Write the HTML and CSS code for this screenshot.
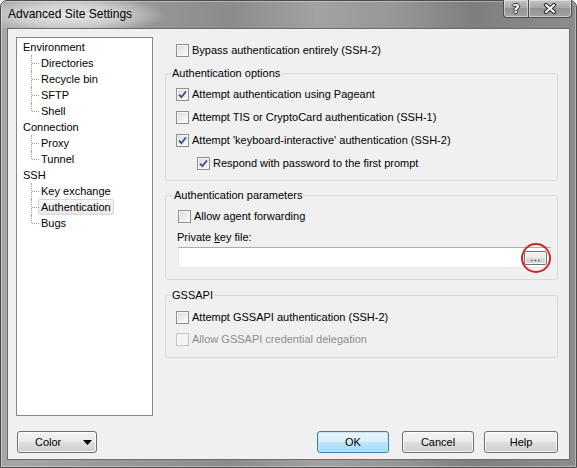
FILE: index.html
```html
<!DOCTYPE html>
<html>
<head>
<meta charset="utf-8">
<title>Advanced Site Settings</title>
<link rel="stylesheet" href="styles.css">
</head>
<body>
<div class="window">
  <div class="titlebar">
    <span class="title">Advanced Site Settings</span>
    <div class="caption">
      <div class="cap-btn cap-help"><span class="qmark">?</span></div>
      <div class="cap-btn cap-close">
        <svg width="14" height="11" viewBox="0 0 14 11">
          <path d="M3 2 L11 9 M11 2 L3 9" stroke="#2e2e2e" stroke-width="4.2" stroke-linecap="round"/>
          <path d="M3 2 L11 9 M11 2 L3 9" stroke="#ffffff" stroke-width="2" stroke-linecap="round"/>
        </svg>
      </div>
    </div>
  </div>
  <div class="client">
    <div class="main">
      <div class="tree">
        <div class="node">Environment</div>
        <div class="node child">Directories</div>
        <div class="node child">Recycle bin</div>
        <div class="node child">SFTP</div>
        <div class="node child last">Shell</div>
        <div class="node">Connection</div>
        <div class="node child">Proxy</div>
        <div class="node child last">Tunnel</div>
        <div class="node">SSH</div>
        <div class="node child">Key exchange</div>
        <div class="node child"><span class="sel">Authentication</span></div>
        <div class="node child last">Bugs</div>
      </div>
      <div class="panel">
        <div class="row bypass"><span class="cb"></span><span>Bypass authentication entirely (SSH-2)</span></div>

        <fieldset class="group g1">
          <legend>Authentication options</legend>
          <div class="row"><span class="cb checked"><svg width="11" height="11" viewBox="0 0 11 11"><path d="M2 5.6 L4.4 8.2 L9 2.4" fill="none" stroke="#3d5088" stroke-width="1.8"/></svg></span><span>Attempt authentication using Pageant</span></div>
          <div class="row"><span class="cb"></span><span>Attempt TIS or CryptoCard authentication (SSH-1)</span></div>
          <div class="row"><span class="cb checked"><svg width="11" height="11" viewBox="0 0 11 11"><path d="M2 5.6 L4.4 8.2 L9 2.4" fill="none" stroke="#3d5088" stroke-width="1.8"/></svg></span><span>Attempt 'keyboard-interactive' authentication (SSH-2)</span></div>
          <div class="row indent"><span class="cb checked"><svg width="11" height="11" viewBox="0 0 11 11"><path d="M2 5.6 L4.4 8.2 L9 2.4" fill="none" stroke="#3d5088" stroke-width="1.8"/></svg></span><span>Respond with password to the first prompt</span></div>
        </fieldset>

        <fieldset class="group g2">
          <legend>Authentication parameters</legend>
          <div class="row"><span class="cb"></span><span>Allow agent forwarding</span></div>
          <div class="field-label">Private <u>k</u>ey file:</div>
          <div class="edit">
            <div class="browse">...<span class="circle"></span></div>
          </div>
        </fieldset>

        <fieldset class="group g3">
          <legend>GSSAPI</legend>
          <div class="row"><span class="cb"></span><span>Attempt GSSAPI authentication (SSH-2)</span></div>
          <div class="row disabled"><span class="cb"></span><span>Allow GSSAPI credential delegation</span></div>
        </fieldset>
      </div>
    </div>
    <div class="footer">
      <div class="btn btn-color"><span>Color</span><svg class="tri" width="9" height="5" viewBox="0 0 9 5"><path d="M0 0 H9 L4.5 5 Z" fill="#000"/></svg></div>
      <div class="btn btn-ok">OK</div>
      <div class="btn btn-cancel">Cancel</div>
      <div class="btn btn-help">Help</div>
    </div>
  </div>
</div>
</body>
</html>
```
FILE: styles.css
```css
* { box-sizing: border-box; }
html, body { margin: 0; padding: 0; }
body {
  width: 577px;
  height: 468px;
  overflow: hidden;
  background: #ffffff;
  font-family: "Liberation Sans", Arial, sans-serif;
  font-size: 11px;
  color: #000;
}

.window {
  width: 577px;
  height: 468px;
  display: flex;
  flex-direction: column;
  border: 1px solid #4c4c4c;
  border-radius: 7px 7px 0 0;
  background:
    radial-gradient(ellipse 95px 20px at 70px 14px, rgba(236,236,236,0.95) 0%, rgba(236,236,236,0.6) 55%, rgba(236,236,236,0) 100%),
    linear-gradient(90deg, #a7a7a7 0%, #949494 28%, #8b8b8b 40%, #a2a2a2 55%, #979797 68%, #7f7f7f 82%, #8c8c8c 100%);
  box-shadow: inset 0 0 0 1px rgba(255,255,255,0.35);
}

.titlebar {
  flex: none;
  height: 27px;
  display: flex;
  align-items: flex-start;
  padding-left: 7px;
}
.title {
  margin-top: 6px;
  font-size: 12px;
  line-height: 15px;
  color: #000;
}
.caption {
  margin-left: auto;
  margin-right: 4px;
  margin-top: -1px;
  display: flex;
}
.cap-btn {
  height: 18px;
  border: 1px solid #4e4e4e;
  border-top: none;
  background: linear-gradient(180deg, #c4c4c4 0%, #a9a9a9 45%, #939393 50%, #a3a3a3 100%);
  box-shadow: inset 0 0 0 1px rgba(255,255,255,0.45);
  display: flex;
  align-items: center;
  justify-content: center;
}
.cap-help {
  width: 26px;
  border-radius: 0 0 0 4px;
}
.cap-close {
  width: 43px;
  border-left: none;
  border-radius: 0 0 4px 0;
}
.qmark {
  font-family: "DejaVu Sans", sans-serif;
  font-weight: bold;
  font-size: 13px;
  line-height: 14px;
  color: #fff;
  text-shadow: 1px 0 0 #2e2e2e, -1px 0 0 #2e2e2e, 0 1px 0 #2e2e2e, 0 -1px 0 #2e2e2e;
}

.client {
  flex: 1;
  margin: 0 6px 7px 6px;
  border: 1px solid #6c6c6c;
  background: #f0f0f0;
  display: flex;
  flex-direction: column;
  padding: 8px 11px 6px 8px;
}

.main {
  display: flex;
  height: 379px;
  gap: 12px;
}

.tree {
  flex: none;
  width: 137px;
  height: 379px;
  border: 1px solid #828790;
  background: #fff;
  padding-top: 1px;
}
.node {
  height: 16px;
  line-height: 16px;
  padding-left: 6px;
  white-space: nowrap;
}
.child {
  position: relative;
  padding-left: 24px;
}
.child::before {
  content: "";
  position: absolute;
  left: 14px;
  top: 0;
  height: 16px;
  border-left: 1px dotted #a0a0a0;
}
.child.last::before { height: 8px; }
.child::after {
  content: "";
  position: absolute;
  left: 15px;
  top: 8px;
  width: 7px;
  border-top: 1px dotted #a0a0a0;
}
.sel {
  display: inline-block;
  height: 16px;
  line-height: 14px;
  margin-left: -3px;
  padding: 0 2px;
  border: 1px solid #d9d9d9;
  border-radius: 2px;
  background: linear-gradient(180deg, #f8f8f8, #e8e8e8);
}

.panel {
  flex: 1;
  display: flex;
  flex-direction: column;
  min-width: 0;
}

.row {
  display: flex;
  align-items: center;
  height: 16px;
  gap: 3px;
  white-space: nowrap;
}
.bypass {
  margin-top: 5px;
  margin-left: 11px;
}
.cb {
  flex: none;
  width: 13px;
  height: 13px;
  border: 1px solid #8e8f8f;
  background: linear-gradient(135deg, #d6d8db 0%, #eeeeee 55%, #fbfbfb 100%);
  box-shadow: inset 0 0 0 1px #f6f6f6;
  display: flex;
  align-items: center;
  justify-content: center;
}
.cb svg { display: block; }
.disabled { color: #8d8d8d; }
.disabled .cb {
  border-color: #c7c7c7;
  background: #f4f4f4;
  box-shadow: none;
}

.group {
  margin: 0;
  min-inline-size: 0;
  border: 1px solid #d5dadd;
  border-radius: 3px;
  padding: 6px 5px 9px 10px;
}
.group legend {
  font-size: 11px;
  line-height: 13px;
  padding: 0 1px;
  margin-left: -5px;
}
.g1 { margin-top: 9px; }
.g1 .row + .row { margin-top: 7px; }
.g1 .indent { margin-left: 21px; }

.g2 {
  margin-top: 8px;
  padding-bottom: 11px;
  padding-left: 12px;
}
.field-label {
  margin-top: 6px;
  height: 14px;
  line-height: 14px;
  margin-left: -1px;
}
.edit {
  margin-top: 3px;
  height: 21px;
  border: 1px solid;
  border-color: #abadb3 #dbdfe6 #e3e9ef #e2e3ea;
  background: #fff;
  display: flex;
  justify-content: flex-end;
  align-items: flex-start;
  padding: 3px 3px 0 0;
  margin-right: 1px;
}
.browse {
  position: relative;
  width: 23px;
  height: 14px;
  border: 1px solid #707070;
  border-radius: 2px;
  background: linear-gradient(180deg, #f2f2f2 0%, #ebebeb 50%, #dddddd 50%, #cfcfcf 100%);
  box-shadow: inset 0 0 0 1px #fbfbfb;
  font-size: 11px;
  line-height: 11px;
  text-align: center;
  letter-spacing: 0.5px;
}
.circle {
  position: absolute;
  left: -4px;
  top: -9px;
  width: 30px;
  height: 30px;
  border: 2px solid #cc2626;
  border-radius: 50%;
}

.g3 { margin-top: 9px; padding-top: 7px; padding-bottom: 10px; }
.g3 .row + .row { margin-top: 6px; }

.footer {
  flex: none;
  display: flex;
  height: 22px;
  margin-top: 15px;
}
.btn {
  height: 22px;
  border: 1px solid #707070;
  border-radius: 3px;
  background: linear-gradient(180deg, #f2f2f2 0%, #ebebeb 48%, #dddddd 52%, #cfcfcf 100%);
  box-shadow: inset 0 0 0 1px rgba(255,255,255,0.75);
  display: flex;
  align-items: center;
  justify-content: center;
  font-size: 11px;
}
.btn-color {
  width: 80px;
  margin-left: 1px;
  justify-content: flex-start;
  padding-left: 17px;
}
.btn-color .tri {
  margin-left: auto;
  margin-right: 4px;
}
.btn-ok {
  margin-left: auto;
  width: 72px;
  border-color: #3c7fb1;
  background: linear-gradient(180deg, #eaf6fd 0%, #d9f0fc 48%, #bee6fd 52%, #a7d9f5 100%);
  box-shadow: inset 0 0 0 1px #c6e6f8;
}
.btn-cancel {
  width: 72px;
  margin-left: 13px;
}
.btn-help {
  width: 74px;
  margin-left: 10px;
}
```
